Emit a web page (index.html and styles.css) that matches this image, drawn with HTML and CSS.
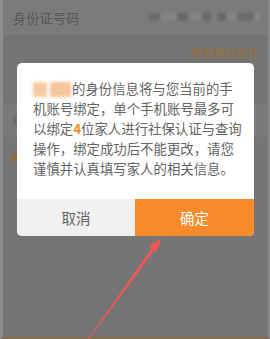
FILE: index.html
```html
<!DOCTYPE html>
<html lang="zh">
<head>
<meta charset="utf-8">
<link rel="stylesheet" href="styles.css">
</head>
<body>
<div class="page">
  <div class="row row-id">
    <span class="label">身份证号码</span>
    <span class="masked"></span>
  </div>
  <div class="row-link">
    <span class="link">使用其他证件</span>
  </div>
  <div class="row row-b"><span class="ghost">绑</span></div>
  <div class="row-check"><span class="dot"></span></div>
</div>

<div class="dialog">
  <p class="msg"><span class="name"></span>的身份信息将与您当前的手<br>机账号绑定，单个手机账号最多可<br>以绑定<b class="num">4</b>位家人进行社保认证与查询<br>操作，绑定成功后不能更改，请您<br>谨慎并认真填写家人的相关信息。</p>
  <div class="actions">
    <div class="btn cancel">取消</div>
    <div class="btn ok">确定</div>
  </div>
</div>

<svg class="arrow" width="270" height="339" viewBox="0 0 270 339">
  <polygon points="161,238 156.9,252.3 154.2,250.4 88.6,339.5 87.6,339.5 151.4,248.4 148.7,246.5" fill="#f15656"/>
</svg>
</body>
</html>
```

FILE: styles.css
```css
* { box-sizing: border-box; }
html, body { margin: 0; padding: 0; }
body {
  width: 270px;
  height: 339px;
  overflow: hidden;
  position: relative;
  background: #767676;
  font-family: "Noto Sans CJK SC", "Noto Sans", sans-serif;
}
.page {
  width: 270px;
  height: 339px;
  display: flex;
  flex-direction: column;
  border-left: 3px solid #8d8d8d;
  border-right: 2px solid #8a8a8a;
  border-bottom: 2px solid #8a6c44;
  background: #767676;
}
.row {
  display: flex;
  align-items: center;
  padding-left: 10px;
  padding-right: 9px;
}
.row-id {
  height: 36px;
  background: #7b7b7b;
  justify-content: space-between;
  border-bottom: 1px solid #727272;
}
.label {
  font-size: 13px;
  color: #565656;
  letter-spacing: 0.3px;
}
.masked {
  width: 110px;
  height: 8px;
  margin-top: -2px;
  background: linear-gradient(90deg, #6a6a6a 0 10%, #858585 10% 25%, #666 25% 35%, #858585 35% 48%, #686868 48% 56%, #808080 56% 62%, #666 62% 70%, #858585 70% 80%, #6a6a6a 80% 95%, #888 95%);
  filter: blur(1.5px);
  opacity: 0.9;
}
.row-link {
  height: 67px;
  background: #747474;
  display: flex;
  justify-content: flex-end;
  padding: 8px 9px 0 0;
}
.link {
  font-size: 11.3px;
  line-height: 16px;
  letter-spacing: 0.2px;
  color: #9a7038;
}
.row-b {
  height: 34px;
  background: #7a7a7a;
  border-top: 1px solid #727272;
  color: #5a5a5a;
  font-size: 12px;
}
.ghost { opacity: 0.7; }
.row-check {
  flex: 1;
  background: #757575;
  padding: 16px 0 0 9px;
}
.dot {
  display: block;
  width: 9px;
  height: 9px;
  border-radius: 50%;
  background: #9a6a38;
}

.dialog {
  position: absolute;
  left: 17px;
  top: 63px;
  width: 237px;
  height: 173px;
  background: #ffffff;
  border-radius: 5px;
  display: flex;
  flex-direction: column;
  overflow: hidden;
}
.msg {
  margin: 0;
  padding: 15px 0 0 16px;
  height: 136px;
  font-size: 13.4px;
  line-height: 20px;
  color: #646464;
  white-space: nowrap;
}
.name {
  display: inline-block;
  width: 38px;
  height: 15px;
  vertical-align: -3px;
  margin-right: 1px;
  background: linear-gradient(90deg, #f7c9a2 0 36%, #fff 36% 44%, #f6c59c 44% 100%);
  filter: blur(1.6px);
}
.num {
  color: #f08a24;
  font-weight: 700;
}
.actions {
  display: flex;
  height: 37px;
}
.btn {
  display: flex;
  align-items: center;
  justify-content: center;
  font-size: 14.5px;
}
.cancel {
  width: 118px;
  background: #f0f0f0;
  color: #666666;
}
.ok {
  flex: 1;
  background: #f78a2a;
  color: #ffffff;
}
.arrow {
  position: absolute;
  left: 0;
  top: 0;
}
```
